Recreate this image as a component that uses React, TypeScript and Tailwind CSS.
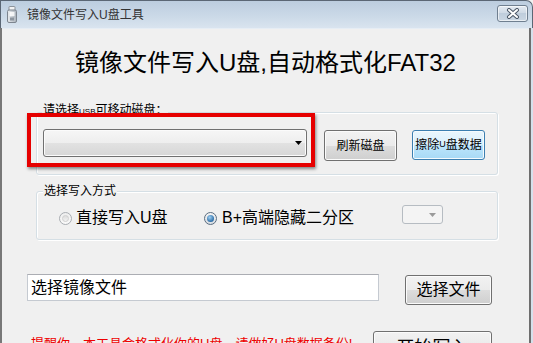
import React from "react";

const F = "font-['Liberation_Sans','Noto_Sans_CJK_SC',sans-serif]";

function TitleIcon() {
  return (
    <svg width="13" height="17" viewBox="0 0 13 17">
      <defs>
        <linearGradient id="ti" x1="0" x2="1" y1="0" y2="0">
          <stop offset="0" stopColor="#e9ecef" />
          <stop offset="1" stopColor="#aab2bb" />
        </linearGradient>
      </defs>
      <rect x="3" y="0.5" width="6" height="4" rx="0.5" fill="#f2f2f2" stroke="#8c939b" />
      <rect x="1.5" y="4" width="9" height="12.5" rx="1.5" fill="url(#ti)" stroke="#7d858f" />
      <rect x="3.5" y="6" width="5" height="4" fill="#ffffff" opacity="0.8" />
      <rect x="4" y="11.5" width="4" height="3" fill="#8d96a0" />
    </svg>
  );
}

function CloseButton() {
  return (
    <div className="ml-auto mr-[4px] self-start mt-[4px] w-[31px] h-[17px] rounded-[3px] border border-[#6f7f90] bg-[linear-gradient(#e4ebf2,#cdd8e4_50%,#bfcddc_50%,#cbd7e3)] shadow-[inset_0_0_0_1px_rgba(255,255,255,0.6)] flex items-center justify-center">
      <svg width="14" height="11" viewBox="0 0 14 11">
        <path d="M3 2 L11 9 M11 2 L3 9" stroke="#4b5766" strokeWidth="4" strokeLinecap="round" />
        <path d="M3 2 L11 9 M11 2 L3 9" stroke="#ffffff" strokeWidth="2" strokeLinecap="round" />
      </svg>
    </div>
  );
}

function Arrow({ color = "#000" }: { color?: string }) {
  return (
    <svg width="7" height="4" viewBox="0 0 7 4">
      <path d="M0 0 H7 L3.5 4 Z" fill={color} />
    </svg>
  );
}

function Radio({ checked }: { checked?: boolean }) {
  return checked ? (
    <span className="w-[13px] h-[13px] rounded-full border border-[#5a6d80] bg-[linear-gradient(#f4f4f4,#d8dde2)] flex items-center justify-center shrink-0">
      <span className="w-[7px] h-[7px] rounded-full bg-[radial-gradient(circle_at_40%_35%,#9fd0f2,#2d6ea8_70%,#1d4f80)]" />
    </span>
  ) : (
    <span className="w-[13px] h-[13px] rounded-full border border-[#a9adb2] bg-[linear-gradient(#eeeeee,#fafafa)] flex items-center justify-center shrink-0">
      <span className="w-[7px] h-[7px] rounded-full bg-[linear-gradient(#dcdcdc,#f3f3f3)] border border-[#d0d0d0]" />
    </span>
  );
}

const btn =
  "rounded-[3px] border border-[#707070] bg-[linear-gradient(#f2f2f2_0%,#ebebeb_50%,#dddddd_50%,#cfcfcf_100%)] shadow-[inset_0_0_0_1px_#fbfbfb] flex items-center justify-center text-black";

export default function App() {
  return (
    <div className={`relative w-[533px] h-[343px] overflow-hidden bg-[#f0f0f0] flex flex-col ${F}`}>
      {/* title bar */}
      <div className="h-[28px] shrink-0 flex items-center pl-[5px] border-t border-r border-l border-[#5b6775] rounded-tr-[7px] bg-[linear-gradient(#bccddf,#ccdae8_60%,#d9e4ef)]">
        <TitleIcon />
        <span className="ml-[8px] text-[12px] leading-[14px] text-[#333]">镜像文件写入U盘工具</span>
        <CloseButton />
      </div>

      {/* body */}
      <div className="flex-1 flex">
        <div className="w-[2px] bg-[#787878]" />
        <div className="w-[527px] flex flex-col border-t border-[#e6edf4]">
          <div className="mt-[22px] text-[24px] leading-[24px] text-center text-black">
            镜像文件写入U盘,自动格式化FAT32
          </div>

          {/* group 1 */}
          <div className="relative ml-[34px] mt-[37px] w-[462px] h-[63px] rounded-[3px] border border-[#d5dfe5] shadow-[inset_1px_1px_0_#ffffff,1px_1px_0_#ffffff]">
            <span className="absolute left-[5px] top-[-10px] px-[1px] bg-[#f0f0f0] text-[12px] leading-[14px] text-black whitespace-nowrap">
              请选择<span className="text-[8px]">USB</span>可移动磁盘：
            </span>
            <div className="flex items-start pl-[6px] pt-[16px]">
              <div className="w-[264px] h-[28px] rounded-[3px] border border-[#707070] bg-[linear-gradient(#f6f6f6_0%,#eeeeee_50%,#e2e2e2_50%,#d6d6d6_100%)] shadow-[inset_0_0_0_1px_#fbfbfb] flex items-center justify-end pr-[4px]">
                <Arrow />
              </div>
              <div className={`ml-[17px] mt-[1px] w-[73px] h-[31px] text-[12px] ${btn}`}>刷新磁盘</div>
              <div className="ml-[15px] mt-[1px] w-[73px] h-[30px] text-[12px] rounded-[3px] border border-[#3c7fb1] bg-[linear-gradient(#eaf6fd_0%,#d9f0fc_50%,#bee6fd_50%,#a7d9f5_100%)] shadow-[inset_0_0_0_1px_#f5fbfe] flex items-center justify-center text-black whitespace-nowrap">
                擦除<span className="text-[9px]">U</span>盘数据
              </div>
            </div>
          </div>

          {/* group 2 */}
          <div className="relative ml-[34px] mt-[16px] w-[462px] h-[49px] rounded-[3px] border border-[#d5dfe5] shadow-[inset_1px_1px_0_#ffffff,1px_1px_0_#ffffff]">
            <span className="absolute left-[6px] top-[-8px] px-[1px] bg-[#f0f0f0] text-[12px] leading-[14px] text-black whitespace-nowrap">
              选择写入方式
            </span>
            <div className="flex items-center pl-[22px] pt-[18px] h-[34px]">
              <div className="w-[145px] flex items-center">
                <Radio />
                <span className="ml-[4px] text-[16px] leading-[16px] text-black whitespace-nowrap">直接写入U盘</span>
              </div>
              <div className="w-[198px] flex items-center">
                <Radio checked />
                <span className="ml-[5px] text-[16px] leading-[16px] text-black whitespace-nowrap">B+高端隐藏二分区</span>
              </div>
              <div className="-mt-[7px] w-[41px] h-[19px] rounded-[3px] border border-[#b6bcc2] bg-[#f4f4f4] flex items-center justify-end pr-[6px]">
                <Arrow color="#9a9a9a" />
              </div>
            </div>
          </div>

          {/* file row */}
          <div className="flex items-start mt-[34px] ml-[25px]">
            <div className="w-[352px] h-[27px] bg-white border border-[#c5cad1] border-t-[#abadb3] flex items-center pl-[3px] text-[16px] leading-[16px] text-black">
              选择镜像文件
            </div>
            <div className={`ml-[26px] mt-[1px] w-[87px] h-[30px] text-[16px] ${btn}`}>选择文件</div>
          </div>

          {/* bottom row */}
          <div className="flex items-start mt-[26px] ml-[29px]">
            <div className="mt-[5px] text-[13px] leading-[16px] text-[#ee0000] whitespace-nowrap w-[342px]">
              提醒你，本工具会格式化你的U盘，请做好U盘数据备份!
            </div>
            <div className={`w-[119px] h-[30px] text-[18px] ${btn} items-start pt-[3px]`}>开始写入</div>
          </div>
        </div>
        <div className="w-[2px] bg-[#6e6e6e]" />
        <div className="w-[2px] bg-[#d6e0eb]" />
      </div>

      {/* red highlight box (overlay) */}
      <div className="absolute left-[27px] top-[113px] w-[288px] h-[54px] border-[4px] border-[#e60000] shadow-[1px_2px_3px_rgba(0,0,0,0.45)]" />
    </div>
  );
}
